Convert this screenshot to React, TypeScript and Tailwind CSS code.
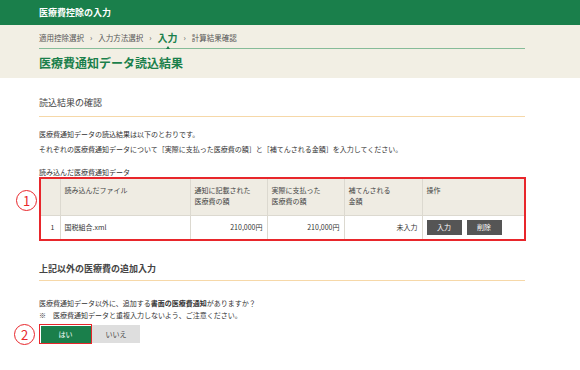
import React from "react";

const F = { fontFamily: '"Noto Sans CJK JP", "Noto Sans", sans-serif' };

function Circled({ n }: { n: string }) {
  return (
    <div className="absolute flex h-[21px] w-[21px] items-center justify-center rounded-full border border-[#e8262b] text-[13px] leading-none text-[#e8262b]">
      {n}
    </div>
  );
}

export default function App() {
  return (
    <div style={F} className="relative h-[370px] w-[580px] overflow-hidden bg-white text-[#333]">
      {/* header */}
      <div className="flex h-[25px] items-center bg-[#1a7f4b] pl-[39px] text-[9px] font-bold text-white">
        医療費控除の入力
      </div>
      {/* beige */}
      <div className="h-[53px] bg-[#f2efe4] pl-[39px]">
        <div className="relative h-[24px] w-[486px] border-b border-[#86bc98]">
          <div className="flex h-[23px] items-end pb-[5px] text-[7.5px] text-[#555]">
            <span>適用控除選択</span>
            <span className="mx-[6px]">›</span>
            <span>入力方法選択</span>
            <span className="mx-[6px]">›</span>
            <span className="text-[10px] font-bold leading-none text-[#1a7f4b]">入力</span>
            <span className="mx-[6px]">›</span>
            <span>計算結果確認</span>
          </div>
          <div className="absolute left-[127px] top-[21px] h-0 w-0 border-x-[2px] border-b-[3px] border-x-transparent border-b-[#1a7f4b]"></div>
        </div>
        <div className="pt-[4px] text-[12px] font-bold leading-[20px] text-[#1a7f4b]">医療費通知データ読込結果</div>
      </div>
      {/* content */}
      <div className="pl-[39px]">
        <div className="w-[486px]">
          <div className="mt-[18px] border-b border-[#f6d8a8] pb-[6px] text-[9px] leading-[14px] text-[#444]">読込結果の確認</div>
          <div className="mt-[10px] text-[7px] leading-[15px]">
            <div>医療費通知データの読込結果は以下のとおりです。</div>
            <div>それぞれの医療費通知データについて［実際に支払った医療費の額］と［補てんされる金額］を入力してください。</div>
          </div>
          <div className="mt-[10px] text-[7px] leading-[10px]">読み込んだ医療費通知データ</div>
          <div className="relative">
            <div className="absolute left-[-23px] top-[13px]"><Circled n="1" /></div>
            <div className="w-[487px] border-2 border-[#e8262b]">
              <table className="w-full table-fixed border-collapse text-[7px]">
                <colgroup>
                  <col className="w-[19px]" />
                  <col className="w-[130px]" />
                  <col className="w-[77px]" />
                  <col className="w-[77px]" />
                  <col className="w-[78px]" />
                  <col />
                </colgroup>
                <thead>
                  <tr className="h-[36px] bg-[#efece3] text-left align-top text-[#444]">
                    <th className="border-r border-[#dcd9d0] font-normal"></th>
                    <th className="border-r border-[#dcd9d0] pl-[4px] pt-[6px] font-normal leading-[11px]">読み込んだファイル</th>
                    <th className="border-r border-[#dcd9d0] pl-[4px] pt-[6px] font-normal leading-[11px]">通知に記載された<br />医療費の額</th>
                    <th className="border-r border-[#dcd9d0] pl-[4px] pt-[6px] font-normal leading-[11px]">実際に支払った<br />医療費の額</th>
                    <th className="border-r border-[#dcd9d0] pl-[4px] pt-[6px] font-normal leading-[11px]">補てんされる<br />金額</th>
                    <th className="pl-[4px] pt-[6px] font-normal leading-[11px]">操作</th>
                  </tr>
                </thead>
                <tbody>
                  <tr className="h-[24px] border-t border-[#dcd9d0]">
                    <td className="border-r border-[#dcd9d0] pr-[5px] text-right">1</td>
                    <td className="border-r border-[#dcd9d0] pl-[4px]">国税組合.xml</td>
                    <td className="border-r border-[#dcd9d0] pr-[4px] text-right">210,000円</td>
                    <td className="border-r border-[#dcd9d0] pr-[4px] text-right">210,000円</td>
                    <td className="border-r border-[#dcd9d0] pr-[4px] text-right">未入力</td>
                    <td className="pl-[4px]">
                      <div className="flex gap-[5px]">
                        <div className="flex h-[15px] w-[35px] items-center justify-center bg-[#555] text-[7px] text-white">入力</div>
                        <div className="flex h-[15px] w-[35px] items-center justify-center bg-[#555] text-[7px] text-white">削除</div>
                      </div>
                    </td>
                  </tr>
                </tbody>
              </table>
            </div>
          </div>
          <div className="mt-[21px] border-b border-[#f6d8a8] pb-[4px] text-[9px] font-bold leading-[14px] text-[#444]">上記以外の医療費の追加入力</div>
          <div className="mt-[16px] text-[7px] leading-[12px]">
            <div>医療費通知データ以外に、追加する<b>書面の医療費通知</b>がありますか？</div>
            <div>※　医療費通知データと重複入力しないよう、ご注意ください。</div>
          </div>
          <div className="relative mt-[3px] flex">
            <div className="absolute left-[-25px] top-[0px]"><Circled n="2" /></div>
            <div className="border-[1.5px] border-[#e8262b] p-[0.5px]">
              <div className="flex h-[17px] w-[50px] items-center justify-center bg-[#1a7f4b] text-[7px] text-white">はい</div>
            </div>
            <div className="mt-[1px] flex h-[18px] w-[48px] items-center justify-center bg-[#dedede] text-[7px] text-[#444]">いいえ</div>
          </div>
        </div>
      </div>
    </div>
  );
}
